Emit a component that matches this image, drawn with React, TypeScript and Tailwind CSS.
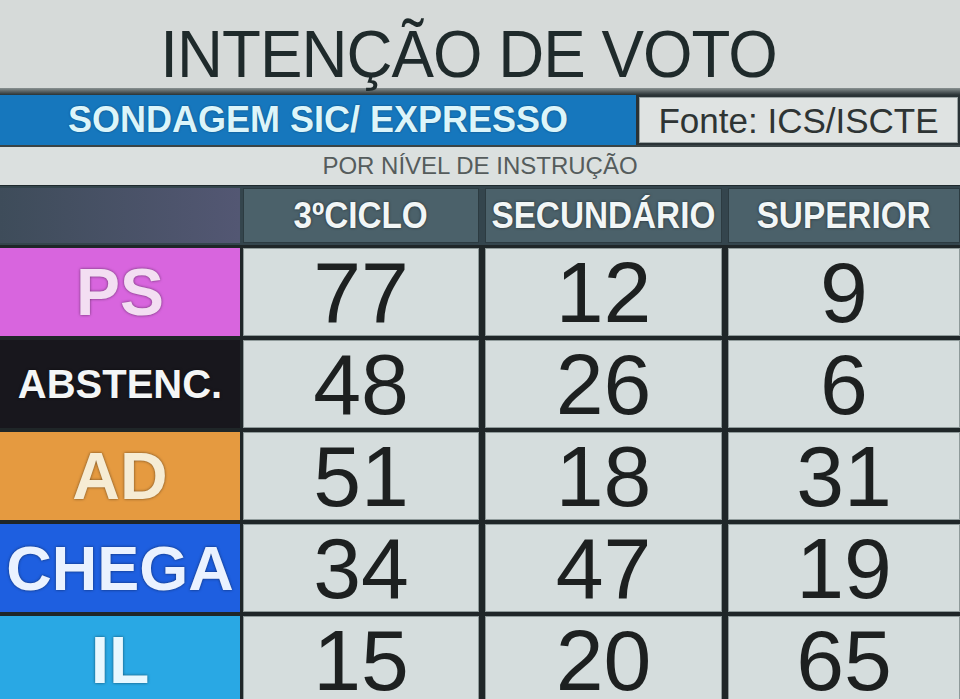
import React from "react";

const rows = [
  { label: "PS", bg: "bg-[#d865de]", text: "text-[#f3def2]", size: "text-[66px]", vals: ["77", "12", "9"] },
  { label: "ABSTENC.", bg: "bg-[#18171d]", text: "text-[#f4f6f6]", size: "text-[40px]", vals: ["48", "26", "6"] },
  { label: "AD", bg: "bg-[#e59a40]", text: "text-[#f6ecd4]", size: "text-[66px]", vals: ["51", "18", "31"] },
  { label: "CHEGA", bg: "bg-[#1e5fe0]", text: "text-[#eaf2ff]", size: "text-[63px]", vals: ["34", "47", "19"] },
  { label: "IL", bg: "bg-[#29a8e4]", text: "text-[#e8f8ff]", size: "text-[66px]", vals: ["15", "20", "65"] },
];

const headers = ["3ºCICLO", "SECUNDÁRIO", "SUPERIOR"];

export default function App() {
  return (
    <div
      className="w-[960px] h-[699px] overflow-hidden bg-[#d5d9d8] flex flex-col"
      style={{ fontFamily: '"Liberation Sans", Arial, sans-serif' }}
    >
      {/* Title */}
      <div className="h-[88px] shrink-0 flex items-center justify-center pr-[22px] pt-[18px] bg-[#d6dad9]">
        <span className="inline-block text-[67px] leading-none text-[#1f2a2b] tracking-[-1px] scale-x-[0.95]">
          INTENÇÃO DE VOTO
        </span>
      </div>
      <div className="h-[7px] shrink-0 bg-gradient-to-b from-[#8a9292] to-[#2a3336]" />

      {/* Sondagem bar */}
      <div className="h-[50px] shrink-0 flex bg-[#2a3336]">
        <div className="w-[636px] bg-[#1677bd] flex items-center justify-center">
          <span className="inline-block font-bold text-[36px] leading-none text-[#dcf5fa] [text-shadow:0_0_2px_rgba(0,30,60,0.6)]">
            SONDAGEM SIC/ EXPRESSO
          </span>
        </div>
        <div className="flex-1 ml-[3px] my-[2px] mr-[2px] bg-[#dfe3e2] border border-[#9aa3a3] flex items-center justify-center">
          <span className="inline-block text-[35px] leading-none text-[#2e3434]">
            Fonte: ICS/ISCTE
          </span>
        </div>
      </div>
      <div className="h-[2px] shrink-0 bg-[#3a4446]" />

      {/* Sub bar */}
      <div className="h-[38px] shrink-0 bg-[#dbe0df] flex items-center justify-center">
        <span className="inline-block text-[24px] leading-none text-[#555c5c]">
          POR NÍVEL DE INSTRUÇÃO
        </span>
      </div>

      {/* Header row */}
      <div className="h-[60px] shrink-0 flex bg-[#34454d] pt-[2px] pb-[2px] border-t border-[#1f2a2e]">
        <div className="w-[240px] bg-gradient-to-r from-[#3e4c5a] to-[#535773]" />
        <div className="flex-1 flex gap-[6px] ml-[3px]">
          {headers.map((h, i) => (
            <div
              key={h}
              className={`${i === 0 ? "w-[236px]" : i === 1 ? "w-[237px]" : "flex-1"} bg-[#4b616a] border border-[#2c3b41] flex items-center justify-center`}
            >
              <span className="inline-block font-bold text-[37px] leading-none text-[#f2f6f6] scale-x-[0.9] [text-shadow:0_0_3px_rgba(0,0,0,0.6)]">
                {h}
              </span>
            </div>
          ))}
        </div>
      </div>

      {/* Data rows */}
      <div className="flex flex-col shrink-0 gap-[4px] bg-[#1f2628] pt-[3px]">
        {rows.map((r) => (
          <div key={r.label} className="h-[88px] flex shrink-0">
            <div className={`w-[240px] ${r.bg} flex items-center justify-center`}>
              <span
                className={`font-bold ${r.size} leading-none ${r.text} [text-shadow:0_0_3px_rgba(0,0,0,0.55)]`}
              >
                {r.label}
              </span>
            </div>
            <div className="flex-1 flex gap-[6px] ml-[3px]">
              {r.vals.map((v, i) => (
                <div
                  key={i}
                  className={`${i === 0 ? "w-[236px]" : i === 1 ? "w-[237px]" : "flex-1"} bg-[#d5dddd] border border-[#8f9a9a] flex items-center justify-center`}
                >
                  <span className="text-[86px] leading-[64px] text-[#1d2020]">{v}</span>
                </div>
              ))}
            </div>
          </div>
        ))}
      </div>
    </div>
  );
}
